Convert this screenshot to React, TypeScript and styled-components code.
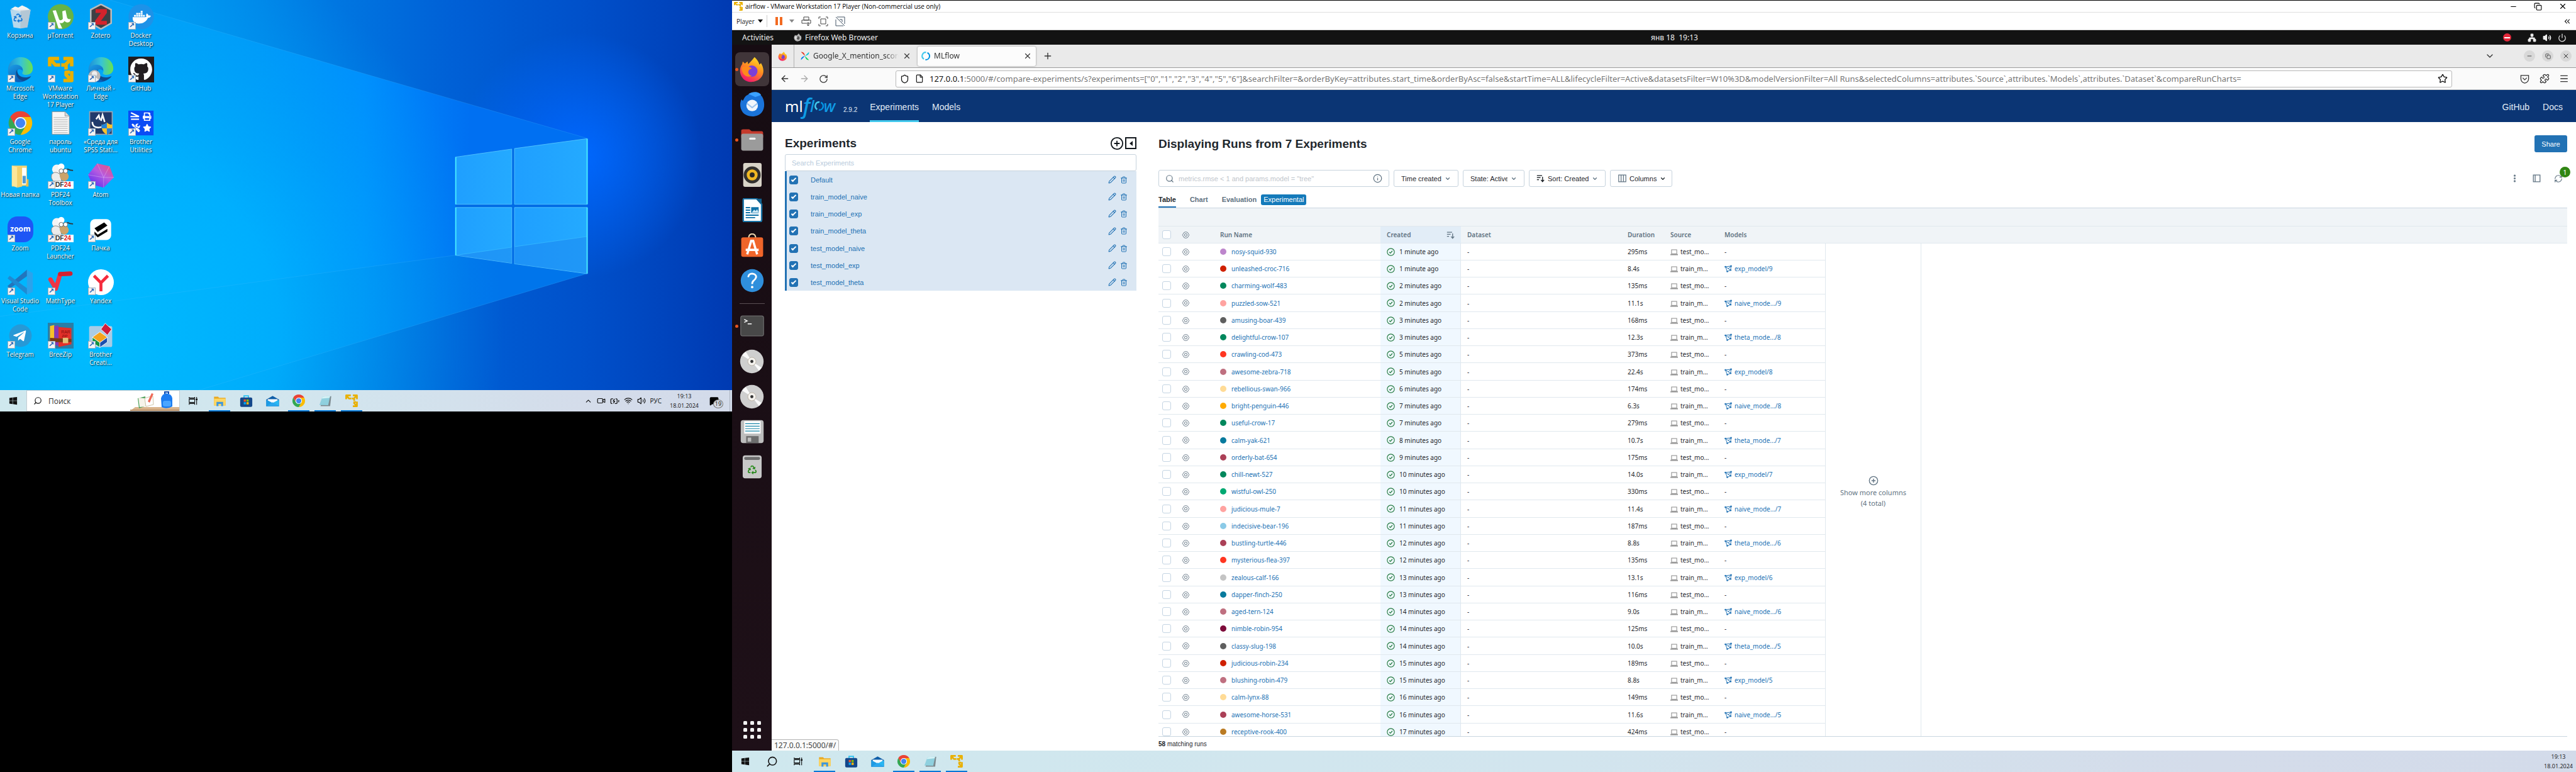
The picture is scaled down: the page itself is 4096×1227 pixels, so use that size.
import React from "react";
import styled, { createGlobalStyle, css } from "styled-components";
import {
  ArrowLeft, ArrowRight, ChevronDown, ChevronUp, CirclePlus, EllipsisVertical, File, Info,
  Menu, Minus, Network, Plus, Power, Puzzle, RefreshCw, RotateCw, Search, Shield, Star,
  Trash2, Volume2, X, Copy, ChevronsLeft, Pencil, Wifi, BatteryCharging, Video, MessageSquareText,
} from "lucide-react";
import { FaGithub, FaDocker, FaTelegramPlane, FaRecycle, FaWindows, FaStar, FaPrint, FaTools } from "react-icons/fa";

const ui = `"Liberation Sans", Arial, sans-serif`;
const ubuntu = `"Noto Sans", "Open Sans", sans-serif`;
const link = "#2272b4";
const muted = "#5f7281";
const ink = "#1f272d";
const line = "#e0e8ee";

const GlobalStyle = createGlobalStyle`
  *, *::before, *::after { box-sizing: border-box; }
  body { margin: 0; background: #000; font-family: ${ui}; font-size: 11px; color: ${ink}; }
  button, input, select { font: inherit; color: inherit; margin: 0; padding: 0; border: 0; background: none; }
  a { color: inherit; text-decoration: none; }
  h1, h2, p, ul { margin: 0; padding: 0; list-style: none; font-weight: inherit; font-size: inherit; }
  svg { display: block; flex: none; }
`;

/* ---------- colour icons ---------- */

type IconProps = { size?: number };
const Art = ({ size = 41, children, box = 48 }: IconProps & { children: React.ReactNode; box?: number }) => (
  <svg width={size} height={size} viewBox={`0 0 ${box} ${box}`} aria-hidden="true">{children}</svg>
);

const ChromeIcon = ({ size }: IconProps) => (
  <Art size={size}>
    <path d="M4.95 13A22 22 0 0 1 43.05 13L24 13A11 11 0 0 0 14.47 29.5Z" fill="#ea4335" />
    <path d="M43.05 13A22 22 0 0 1 24 46L33.53 29.5A11 11 0 0 0 24 13Z" fill="#fbbc05" />
    <path d="M24 46A22 22 0 0 1 4.95 13L14.47 29.5A11 11 0 0 0 33.53 29.5Z" fill="#34a853" />
    <circle cx="24" cy="24" r="11" fill="#fff" />
    <circle cx="24" cy="24" r="9" fill="#4285f4" />
  </Art>
);

const EdgeIcon = ({ size, person }: IconProps & { person?: boolean }) => (
  <Art size={size}>
    <defs>
      <linearGradient id="edgeTop" x1="0" y1="0.4" x2="1" y2="0.4">
        <stop offset="0" stopColor="#1d8fd8" /><stop offset="0.5" stopColor="#36c3d8" /><stop offset="1" stopColor="#6ae24e" />
      </linearGradient>
      <linearGradient id="edgeLow" x1="0" y1="0" x2="0.6" y2="1">
        <stop offset="0" stopColor="#1ba0e8" /><stop offset="1" stopColor="#0b5bb5" />
      </linearGradient>
    </defs>
    <path d="M1 22C3 8 14 1 25 1C38 1 47 11 47 22C47 30 41 34 34 34C29 34 26 32 28 29C31 25 27 17 18 17C9 17 4 21 1 28Z" fill="url(#edgeTop)" />
    <path d="M1 26C3 18 10 14 17 15C25 16 29 21 28 26C20 20 14 27 17 35C19 41 26 46 34 44C26 50 6 50 1 30Z" fill="url(#edgeLow)" />
    <path d="M18 24C12 32 19 45 31 45C36 44 41 41 44 36C32 42 17 38 18 24Z" fill="#114a8b" />
    {person && <><circle cx="12" cy="36" r="11" fill="#b9b9b9" /><circle cx="12" cy="32" r="5" fill="#eee" /><path d="M4 43Q12 34 20 43Q12 50 4 43" fill="#eee" /></>}
  </Art>
);

const VmwareIcon = ({ size }: IconProps) => (
  <Art size={size}>
    <g fill="none" stroke="#e9b000" strokeWidth="6.5" strokeLinejoin="round">
      <path d="M3.5 18V3.5H21M5 5L14 15.500H23" />
      <path d="M29 3.500H44.500V18M43 5L33 15M25 15.500H34V24" />
      <path d="M44.500 27V44.500H29M43 43L34 34V29H41" />
    </g>
  </Art>
);

const FirefoxIcon = ({ size, mono }: IconProps & { mono?: boolean }) => (
  <Art size={size}>
    <defs>
      <linearGradient id="ffBody" x1="0.8" y1="0" x2="0.3" y2="1">
        <stop offset="0" stopColor="#ffe226" /><stop offset="0.45" stopColor="#ff9020" /><stop offset="1" stopColor="#f4136f" />
      </linearGradient>
    </defs>
    <path d="M29 1C34 6 37 10 38 15L41 12C47 22 47 32 41 39C33 49 15 50 7 40C0 32 1 20 6 14L7 9L11 13L16 9L17 14C22 10 25 6 29 1Z" fill={mono ? "#b5b5b5" : "url(#ffBody)"} />
    <circle cx="24" cy="27" r="10.500" fill={mono ? "#555" : "#7b3fd8"} />
    <path d="M5 20C12 16 19 18 24 22C21 23 19 24 18 26C16 30 19 35 24 36C14 40 5 34 5 20Z" fill={mono ? "#ddd" : "#ff8a1c"} />
  </Art>
);

const FolderIcon = ({ size }: IconProps) => (
  <Art size={size}>
    <path d="M3 8H18L21 12H45V40H3Z" fill="#e9a820" />
    <path d="M3 15H45V40H3Z" fill="#fdd663" />
    <path d="M12 27H36V42H29V34H19V42H12Z" fill="#3f97dc" />
  </Art>
);

const StoreIcon = ({ size }: IconProps) => (
  <Art size={size}>
    <path d="M16 13V5H32V13" fill="none" stroke="#29c2f2" strokeWidth="4" />
    <rect x="2" y="11" width="44" height="34" rx="5" fill="#14478a" />
    <path d="M15 18H23V26H15Z" fill="#f35325" /><path d="M25 18H33V26H25Z" fill="#81bc06" />
    <path d="M15 28H23V36H15Z" fill="#05a6f0" /><path d="M25 28H33V36H25Z" fill="#ffba08" />
  </Art>
);

const MailIcon = ({ size }: IconProps) => (
  <Art size={size}>
    <path d="M1 18L24 5L47 18V43H1Z" fill="#0f5ea8" />
    <path d="M6 17H42V33H6Z" fill="#f3f9fd" />
    <path d="M1 19L24 31L1 43Z" fill="#1d9be4" /><path d="M47 19L24 31L47 43Z" fill="#29b6f2" />
    <path d="M1 43L24 28L47 43Z" fill="#2aa7ee" />
  </Art>
);

const NotepadIcon = ({ size }: IconProps) => (
  <Art size={size}>
    <path d="M17 8L45 6L41 42L6 42Z" fill="#7d8a8f" />
    <path d="M13 8L41 5L34 39L2 38Z" fill="#8fd0de" />
    <path d="M13 8L41 5L39 12L11 15Z" fill="#d5f1f5" />
  </Art>
);

const BinIcon = ({ size }: IconProps) => (
  <Art size={size}>
    <path d="M6 10L14 5L20 7L27 3L36 7L42 11L24 15Z" fill="#f3f3f1" />
    <path d="M5 11H43L37 44L24 46L11 44Z" fill="#d7e2ea" opacity="0.85" />
    <path d="M24 13L43 11L37 44L24 46Z" fill="#b2bdc6" opacity="0.6" />
    <g transform="translate(11 18)"><FaRecycle size={17} color="#1878d8" /></g>
  </Art>
);

const TorrentIcon = () => (
  <Art>
    <ellipse cx="24" cy="24" rx="24" ry="23.500" fill="#67b346" />
    <path d="M9 13L15 12L21 29Q24 33 28 28L27 14L33 12L36 26Q38 30 43 28L41 33Q35 37 31 32Q28 38 22 35L27 46L20 46Z" fill="#fff" />
  </Art>
);

const ZoteroIcon = () => (
  <Art>
    <path d="M24 1L43 11V36L24 47L5 36V11Z" fill="#3e4045" stroke="#b9bbbd" strokeWidth="3" />
    <path d="M14 10H35V17L24 32H35V39H13V32L24 17H14Z" fill="#d5232c" />
  </Art>
);

const DockerIcon = () => (
  <Art>
    <circle cx="24" cy="24" r="23.500" fill="#1d92e8" />
    <g transform="translate(8 8)"><FaDocker size={34} color="#fff" /></g>
  </Art>
);

const GithubIcon = () => (
  <Art>
    <rect width="48" height="48" fill="#211d20" />
    <g transform="translate(3 3)"><FaGithub size={42} color="#fff" /></g>
  </Art>
);

const DocIcon = () => (
  <Art>
    <path d="M8 3H32L40 11V45H8Z" fill="#f7f7f7" stroke="#8a8a8a" />
    <path d="M32 3V11H40" fill="#d8d8d8" stroke="#8a8a8a" />
    <path d="M11 14H37M11 18H37M11 22H37M11 26H37M11 30H37M11 34H37M11 38H37M11 42H37" stroke="#a5a5a5" />
  </Art>
);

const SpssIcon = () => (
  <Art>
    <rect x="3" y="3" width="42" height="42" fill="#203a6b" stroke="#9aa5b5" strokeWidth="2" />
    <path d="M8 22C8 34 20 34 30 30M15 17L20 10L22 18M24 20L27 9L31 22" fill="none" stroke="#fff" strokeWidth="3" />
    <path d="M25 27Q31 27 35 23Q39 27 45 27Q46 40 35 46Q24 40 25 27Z" fill="#f8c22c" />
    <path d="M35 23Q31 27 25 27V34H35ZM35 34H45Q42 43 35 46Z" fill="#2283d8" />
  </Art>
);

const BrotherUtilIcon = () => (
  <Art>
    <rect width="47" height="46" y="1" fill="#0a4cf5" />
    <path d="M5 5L20 12M4 12H20M5 17H20" stroke="#fff" strokeWidth="2.500" />
    <g transform="translate(27 4)"><FaPrint size={16} color="#fff" /></g>
    <g transform="translate(6 25)"><FaTools size={16} color="#fff" /></g>
    <g transform="translate(27 25)"><FaStar size={16} color="#fff" /></g>
  </Art>
);

const NewFolderIcon = () => (
  <Art>
    <path d="M8 5H36V42L8 44Z" fill="#f6d573" />
    <path d="M27 9H35V40H27Z" fill="#fff" /><path d="M28 24H34V38H28Z" fill="#4f9ad6" />
    <path d="M8 5L18 8V46L8 42Z" fill="#fbe69a" /><path d="M18 8L27 6V44L18 46Z" fill="#f2cf6b" />
    <path d="M36 30H39V44H34Z" fill="#e5bb4f" />
  </Art>
);

const Pdf24Icon = () => (
  <Art>
    <circle cx="17" cy="12" r="9" fill="#f4f4f4" /><circle cx="25" cy="7" r="6" fill="#fff" />
    <path d="M7 22Q12 14 22 20L26 34H10Q5 28 7 22Z" fill="#ececec" stroke="#777" />
    <path d="M22 20Q34 10 39 24Q39 33 30 34Q22 32 22 20Z" fill="#cba36a" />
    <circle cx="25" cy="15" r="4" fill="#fff" stroke="#555" /><circle cx="33" cy="15" r="4" fill="#fff" stroke="#555" />
    <path d="M36 11Q42 14 47 14" stroke="#333" strokeWidth="2" fill="none" />
    <rect y="34" width="48" height="14" fill="#fff" />
    <text x="14" y="45" fontFamily="Liberation Sans, sans-serif" fontSize="12" fontWeight="700" fill="#333">DF<tspan fill="#e01b22">24</tspan></text>
  </Art>
);

const AtomIcon = () => (
  <Art>
    <defs><linearGradient id="atom" x1="1" y1="0" x2="0.200" y2="1"><stop offset="0" stopColor="#f2506c" /><stop offset="0.500" stopColor="#b65be0" /><stop offset="1" stopColor="#5b2ff0" /></linearGradient></defs>
    <path d="M17 1L40 6L48 27L29 46L8 40L0 22Z" fill="url(#atom)" />
    <path d="M17 1L29 27L48 27M29 27L29 46M29 27L0 22M29 27L40 6" fill="none" stroke="#ffffff55" />
  </Art>
);

const ZoomIcon = () => (
  <Art>
    <rect width="48" height="48" rx="18" fill="#1e56f5" />
    <text x="24" y="28" textAnchor="middle" fontFamily="Open Sans, sans-serif" fontSize="14" fontWeight="700" fill="#fff">zoom</text>
  </Art>
);

const PachkaIcon = () => (
  <Art>
    <rect x="4" y="5" width="39" height="39" rx="9" fill="#fff" />
    <path d="M12 22L30 11L36 17L18 29Z" fill="#000" />
    <path d="M12 28L18 34L36 23V28L18 39L12 33Z" fill="#000" />
  </Art>
);

const VscodeIcon = () => (
  <Art>
    <path d="M36 1L47 7V42L36 47Z" fill="#2ba3ec" />
    <path d="M36 13V1L0 31L4 36Z" fill="#2275bd" /><path d="M36 35V47L0 17L4 12Z" fill="#1f8ad2" />
  </Art>
);

const MathTypeIcon = () => (
  <Art>
    <path d="M5 19L15 36L23 9L42 8" fill="none" stroke="#ee3545" strokeWidth="8" strokeLinecap="round" strokeLinejoin="round" />
    <path d="M23 9L42 8" stroke="#d22030" strokeWidth="8" strokeLinecap="round" />
  </Art>
);

const YandexIcon = () => (
  <Art>
    <circle cx="24" cy="24" r="24" fill="#fff" />
    <path d="M11 12L24 25L37 12M24 24V41" fill="none" stroke="#f52b3c" strokeWidth="5.500" />
  </Art>
);

const TelegramIcon = () => (
  <Art>
    <circle cx="24" cy="24" r="21" fill="#2799d6" />
    <g transform="translate(9 11)"><FaTelegramPlane size={27} color="#fff" /></g>
  </Art>
);

const BreeZipIcon = () => (
  <Art>
    <rect width="48" height="48" fill="#2a7ea6" />
    <path d="M4 6L12 4V42L4 38Z" fill="#f6c12a" /><path d="M12 6L20 5V43L12 41Z" fill="#8638b5" />
    <path d="M20 8L44 10V40L20 45Z" fill="#e4302a" />
    <text x="25" y="20" fontFamily="Liberation Sans, sans-serif" fontSize="8" fill="#7a0f0c">RAR</text>
    <text x="26" y="27" fontFamily="Liberation Sans, sans-serif" fontSize="7" fill="#7a0f0c">ZIP</text>
    <path d="M4 28L44 30V36L4 36Z" fill="#7a3b14" /><rect x="28" y="28" width="10" height="10" fill="#e2c27a" />
  </Art>
);

const BrotherCreatiIcon = () => (
  <Art>
    <rect x="2" y="6" width="43" height="39" rx="3" fill="#a9cce6" />
    <path d="M24 12L32 1L44 12L36 23Z" fill="#cf1c3c" stroke="#fff" />
    <path d="M8 27L22 17L36 27L22 37Z" fill="#f5a31d" stroke="#fff" />
    <path d="M8 27L22 37V46L8 37Z" fill="#149441" stroke="#fff" /><path d="M22 37L36 27V36L22 46Z" fill="#1b4fae" stroke="#fff" />
  </Art>
);

/* dock icons */

const ThunderbirdIcon = ({ size }: IconProps) => (
  <Art size={size}>
    <path d="M4 14C8 22 6 10 15 6C24 -1 38 0 41 7C48 14 49 30 43 38C35 50 14 49 6 39C0 31 0 20 4 14Z" fill="#1a73d9" />
    <path d="M17 4C26 -2 38 0 41 6L30 10Z" fill="#3ba1ff" />
    <circle cx="24" cy="26" r="11" fill="#f2f6fb" /><path d="M14 22L24 30L34 22" fill="none" stroke="#9cc4ee" strokeWidth="2.500" />
  </Art>
);
const FilesIcon = ({ size }: IconProps) => (
  <Art size={size}>
    <path d="M2 6Q2 3 6 3H18L23 7H43Q46 7 46 11V20H2Z" fill="#c53a2c" />
    <rect x="2" y="12" width="44" height="34" rx="4" fill="#9b9b9b" /><rect x="18" y="20" width="13" height="4" rx="2" fill="#f2f2f2" />
  </Art>
);
const SpeakerIcon = ({ size }: IconProps) => (
  <Art size={size}>
    <rect x="6" width="37" height="48" rx="4" fill="#d9d4c8" />
    <circle cx="24" cy="24" r="17" fill="#33312e" /><circle cx="24" cy="24" r="11" fill="#f0b823" /><circle cx="24" cy="24" r="5" fill="#2b2926" />
  </Art>
);
const WriterIcon = ({ size }: IconProps) => (
  <Art size={size}>
    <path d="M8 1H33L43 12V44Q43 47 40 47H8Q6 47 6 44V4Q6 1 8 1Z" fill="#fff" stroke="#1a75a8" strokeWidth="3" />
    <path d="M31 1H43V14Z" fill="#12628f" />
    <path d="M11 19H20M11 24H20M11 29H20M11 34H37M11 39H30" stroke="#1273a8" strokeWidth="2.500" />
    <rect x="22" y="18" width="15" height="12" fill="#1273a8" /><path d="M23 29L28 23L31 26L34 22L37 29Z" fill="#cfe8f5" />
  </Art>
);
const SoftwareIcon = ({ size }: IconProps) => (
  <Art size={size}>
    <path d="M17 10Q17 1 24 1Q31 1 31 10" fill="none" stroke="#f0d9b0" strokeWidth="2.500" />
    <rect x="2" y="8" width="44" height="39" rx="4" fill="#f0652a" />
    <path d="M14 42L22 15H26L34 42M11 33H37" fill="none" stroke="#fff" strokeWidth="4.500" />
  </Art>
);
const HelpIcon = ({ size }: IconProps) => (
  <Art size={size}>
    <circle cx="24" cy="24" r="23" fill="#2f8fdc" />
    <path d="M16 17Q17 10 24 10Q32 11 32 17Q31 21 27 24Q24 26 24 31" fill="none" stroke="#fff" strokeWidth="3.500" /><circle cx="24" cy="37" r="2.500" fill="#fff" />
  </Art>
);
const TerminalIcon = ({ size }: IconProps) => (
  <Art size={size}>
    <rect x="1" y="4" width="46" height="40" rx="4" fill="#484848" stroke="#6d6d6d" strokeWidth="1.500" />
    <path d="M8 11L14 14L8 17M15 20H23" fill="none" stroke="#fff" strokeWidth="1.800" />
  </Art>
);
const DiscIcon = ({ size }: IconProps) => (
  <Art size={size}>
    <circle cx="24" cy="24" r="23" fill="#cfcfcf" /><path d="M24 24L5 12L12 5ZM24 24L43 36L38 42Z" fill="#fafafa" />
    <circle cx="24" cy="24" r="8" fill="#f5f3ef" stroke="#b5ab9c" /><circle cx="24" cy="24" r="3" fill="#333" />
  </Art>
);
const FloppyIcon = ({ size }: IconProps) => (
  <Art size={size}>
    <rect x="1" y="1" width="46" height="46" rx="5" fill="#bdbdbd" /><rect x="8" y="3" width="33" height="25" fill="#fff" />
    <path d="M10 8H39M10 13H39M10 18H39M10 23H39" stroke="#1a86a8" strokeWidth="1.500" />
    <rect x="12" y="33" width="25" height="14" fill="#6d6d6d" /><rect x="15" y="36" width="7" height="8" fill="#bdbdbd" />
  </Art>
);
const TrashDockIcon = ({ size }: IconProps) => (
  <Art size={size}>
    <rect x="5" y="1" width="38" height="46" rx="5" fill="#c8c8c8" /><rect x="8" y="4" width="32" height="6" rx="3" fill="#6d6d6d" />
    <g transform="translate(15 21)"><FaRecycle size={18} color="#2a8a1e" /></g>
  </Art>
);
const AppsIcon = () => (
  <Art size={28} box={28}>
    {[0, 11, 22].map((y) => [0, 11, 22].map((x) => <rect key={`${x}-${y}`} x={x} y={y} width="6" height="6" rx="1.500" fill="#f2f2f2" />))}
  </Art>
);

/* page glyphs */

const AirflowIcon = () => (
  <Art size={14}>
    <path d="M24 24L2 2Q20 0 24 24Z" fill="#e43921" /><path d="M24 24L46 2Q48 20 24 24Z" fill="#00c7d4" />
    <path d="M24 24L46 46Q28 48 24 24Z" fill="#04d659" /><path d="M24 24L2 46Q0 28 24 24Z" fill="#017cee" />
  </Art>
);
const FlowRing = ({ size = 14, w = 7 }: IconProps & { w?: number }) => (
  <Art size={size}>
    <path d="M14 41A20 20 0 0 1 26 4" fill="none" stroke="#43c9ed" strokeWidth={w} />
    <path d="M33 6A20 20 0 0 1 22 44" fill="none" stroke="#0194e2" strokeWidth={w} />
  </Art>
);
const EyeIcon = () => (
  <Art size={13} box={16}>
    <path d="M1.500 8L4.500 3Q8 0.800 11.500 3L14.500 8L11.500 13Q8 15.200 4.500 13Z" fill="none" stroke={muted} strokeWidth="1.100" />
    <circle cx="8" cy="8" r="2.600" fill="none" stroke={muted} strokeWidth="1.200" />
  </Art>
);
const CheckRing = () => (
  <Art size={13} box={16}>
    <circle cx="8" cy="8" r="7" fill="none" stroke="#277c43" strokeWidth="1.400" /><path d="M5 8.200L7.200 10.300L11 5.800" fill="none" stroke="#277c43" strokeWidth="1.600" />
  </Art>
);
const LaptopIcon = () => (
  <Art size={12} box={16}>
    <rect x="2.500" y="4" width="11" height="8.500" fill="none" stroke="#8f8f8f" strokeWidth="1.400" /><path d="M0 13H16V15.500H0Z" fill="#9a9a9a" />
  </Art>
);
const ModelIcon = () => (
  <Art size={12} box={16}>
    <path d="M2 4L14 2.500L13 11L6 14ZM2 4L13 11M14 2.500L8 8" fill="none" stroke={link} strokeWidth="1.300" />
    {[[2, 4], [14, 2.5], [13, 11], [6, 14]].map(([x, y]) => <circle key={x} cx={x} cy={y} r="1.800" fill={link} />)}
  </Art>
);
const SortIcon = ({ color = muted }: { color?: string }) => (
  <Art size={13} box={16}>
    <path d="M1 2.500H11M1 6.500H8M1 10.500H5M12 5V14M9 11L12 14.500L15 11" fill="none" stroke={color} strokeWidth="1.600" />
  </Art>
);
const ColumnsIcon = () => (
  <Art size={13} box={16}><path d="M1 1.500H15V14.500H1ZM5.700 1.500V14.500M10.300 1.500V14.500" fill="none" stroke={muted} strokeWidth="1.500" /></Art>
);
const PanelIcon = () => (
  <Art size={13} box={16}><path d="M1.500 1.500H14.500V14.500H1.500ZM5 1.500V14.500" fill="none" stroke={muted} strokeWidth="1.600" /></Art>
);
const TaskViewIcon = () => (
  <Art size={14} box={16}><path d="M1 1V3H11V1M1 15V13H11V15M1 5H11V11H1ZM14.500 1V4M14.500 7V15" fill="none" stroke="#000" strokeWidth="1.200" /><path d="M13 4H16V7H13Z" /></Art>
);
const TaskSearchIcon = styled(Search)` transform: scaleX(-1); `;

/* ---------- layout ---------- */

const Screens = styled.div`
  display: grid; grid-template-columns: 1164fr 2932fr; height: 100vh; background: #000; overflow: hidden;
`;
const Laptop = styled.section`
  display: flex; flex-direction: column; align-self: start; aspect-ratio: 1366 / 768; min-width: 0;
`;
const Desktop = styled.div` position: relative; flex: 1; min-height: 0; `;
const Backdrop = styled.svg` position: absolute; inset: 0; width: 100%; height: 100%; `;
const Shortcuts = styled.ul`
  position: relative; height: 100%; padding: 6px 0 23px; width: max-content;
  display: grid; grid-auto-flow: column; grid-template-rows: repeat(7, 1fr); grid-auto-columns: 64px;
`;
const Shortcut = styled.li` display: flex; flex-direction: column; align-items: center; min-height: 0; gap: 3px; `;
const ShortcutArt = styled.span<{ $arrow?: boolean }>`
  position: relative;
  ${(p) => p.$arrow && css`
    &::after {
      content: "↗"; position: absolute; left: 0; bottom: 0; width: 12px; height: 12px; background: #f4f4f4; border: 1px solid #9fb0bf;
      color: #2460b0; font: 700 11px/10px "DejaVu Sans", sans-serif; text-align: center;
    }
  `}
`;
const ShortcutName = styled.span`
  font: 10px/13px "Open Sans", ${ubuntu}; color: #fff; text-align: center; text-shadow: 1px 1px 2px #000; white-space: pre-line;
  width: 64px;
`;

const Taskbar = styled.footer`
  display: flex; align-items: stretch; flex: none; height: 34px; color: #111;
  background: linear-gradient(90deg, #cfe8ee, #d2e5ee 45%, #d4dcea 80%, #d3dbea);
`;
const TaskButton = styled.button<{ $open?: boolean; $narrow?: boolean }>`
  display: grid; place-items: center; width: 42px; padding: 0 4px;
  background: ${(p) => (p.$open ? "linear-gradient(#0078d7, #0078d7) center bottom / 34px 2px no-repeat" : "none")};
`;
const TaskSearch = styled.label`
  display: flex; align-items: center; gap: 10px; width: 244px; padding-left: 10px; background: #fff; border: 1px solid #c3ccd2; overflow: hidden;
`;
const TaskSearchInput = styled.input`
  flex: 1; min-width: 0; font: 12px "Open Sans", ${ubuntu}; outline: 0;
  &::placeholder { color: #333; opacity: 1; }
`;
const Tray = styled.div` display: flex; align-items: center; margin-left: auto; gap: 7px; `;
const TrayText = styled.span` font: 10px/15px "Open Sans", ${ubuntu}; `;
const Clock = styled.time<{ $edge?: boolean }>`
  font: 9px/15px "Open Sans", ${ubuntu}; text-align: center; white-space: pre-line; margin: ${(p) => (p.$edge ? "0 5px 0 0" : "0 10px 0 6px")};
`;
const Notice = styled.button` position: relative; margin-right: 17px; `;
const NoticeCount = styled.span`
  position: absolute; left: 6px; top: 5px; width: 16px; height: 14px; border: 1px solid #777; border-radius: 50%; background: #d5dae2;
  font: 9px/12px "Open Sans", sans-serif; text-align: center;
`;
const ShowDesktop = styled.button` width: 4px; align-self: stretch; border-left: 1px solid #a9b3bf; margin-left: -7px; `;

const Monitor = styled.section` display: flex; flex-direction: column; min-width: 0; min-height: 0; border-top: 1px solid #000; `;
const TitleBar = styled.header`
  display: flex; align-items: center; gap: 4px; height: 19px; padding: 0 14px 0 3px; background: #fff; border-bottom: 1px solid #dfdfdf;
  font: 10px "Open Sans", ${ubuntu}; color: #000;
`;
const TitleActions = styled.div` margin-left: auto; display: flex; gap: 26px; `;
const PlayerBar = styled.div`
  display: flex; align-items: center; height: 28px; padding: 0 7px; gap: 11px; background: #fff; border-bottom: 1px solid #d5d5d5;
  font: 10px "Open Sans", ${ubuntu}; color: #222;
`;
const PlayerMenu = styled.button`
  display: flex; align-items: center; gap: 5px; padding-right: 6px; height: 19px; border-right: 1px solid #ccc;
`;
const Caret = styled.span<{ $dim?: boolean }>`
  border: 4px solid transparent; border-top: 5px solid ${(p) => (p.$dim ? "#888" : "#000")}; border-bottom: 0;
`;
const PauseMark = styled.button` width: 11px; height: 13px; margin-left: 2px; border: solid #f26a21; border-width: 0 4px; `;
const PushRight = styled.span` margin-left: auto; `;

const GnomeBar = styled.div`
  display: grid; grid-template-columns: 1fr auto 1fr; align-items: center; height: 23px; padding: 0 15px 0 16px; background: #131313;
  color: #eee; font: 12px/16px ${ubuntu};
`;
const GnomeLeft = styled.div` display: flex; align-items: center; gap: 5px; `;
const Activities = styled.button` margin-right: 27px; `;
const GnomeClock = styled.time` padding-left: 64px; font-size: 12px; white-space: pre; `;
const GnomeRight = styled.div` display: flex; justify-content: flex-end; align-items: center; gap: 10px; `;
const Busy = styled.span`
  display: grid; place-items: center; width: 13px; height: 13px; margin-right: 16px; border-radius: 50%; background: #e4273a;
  &::after { content: ""; width: 9px; height: 2px; background: #fff; }
`;

const Guest = styled.div` display: flex; flex: 1; min-height: 0; `;
const Dock = styled.nav`
  display: flex; flex-direction: column; align-items: center; width: 63px; flex: none; padding: 11px 0 19px; background: linear-gradient(#160c12, #1e1018);
`;
const DockItem = styled.button<{ $running?: boolean; $active?: boolean }>`
  position: relative; display: grid; place-items: center; width: 54px; height: 56px; flex: none; border-radius: 8px;
  background: ${(p) => (p.$active ? "#403539" : "none")}; background-clip: padding-box; border: solid transparent; border-width: 1px 0;
  ${(p) => p.$running && css`
    &::before { content: ""; position: absolute; left: 0; width: 5px; height: 5px; border-radius: 50%; background: #e95420; }
  `}
`;
const DockRule = styled.hr` width: 40px; height: 1px; margin: 8px 0 7px; border: 0; background: #5a4f54; `;
const DockSpace = styled.div` flex: 1; `;

const Browser = styled.div` position: relative; display: flex; flex-direction: column; flex: 1; min-width: 0; background: #fff; `;
const TabStrip = styled.div`
  display: flex; align-items: center; gap: 4px; height: 37px; padding-right: 7px; background: #eaeaea; border-bottom: 1px solid #9c9c9c;
  font: 12px/16px ${ubuntu}; color: #333;
`;
const PinnedTab = styled.button` display: grid; place-items: center; width: 36px; height: 36px; border-right: 1px solid #b0b0b0; `;
const BrowserTab = styled.div<{ $active?: boolean }>`
  display: flex; align-items: center; gap: 6px; width: 188px; height: 31px; padding: 0 6px; border-radius: 3px;
  ${(p) => p.$active && css` background: #fcfcfc; box-shadow: 0 0 3px #0006; `}
`;
const TabTitle = styled.span`
  flex: 1; overflow: hidden; white-space: nowrap; mask-image: linear-gradient(90deg, #000 85%, transparent);
`;
const NewTab = styled.button` display: grid; place-items: center; width: 30px; `;
const WindowActions = styled.div` display: flex; align-items: center; gap: 11px; margin-left: auto; `;
const RoundAction = styled.button` display: grid; place-items: center; width: 18px; height: 18px; border-radius: 50%; background: #d8d8d8; `;
const TabList = styled.button` margin-right: 35px; `;
const AddressBar = styled.div`
  display: flex; align-items: center; height: 35px; padding: 0 4px 0 5px; background: #fafafa; border-bottom: 1px solid #ccc; color: #444;
`;
const ToolButton = styled.button<{ $off?: boolean }>` display: grid; place-items: center; width: 31px; height: 31px; color: ${(p) => (p.$off ? "#aaa" : "#333")}; `;
const AddressBox = styled.label`
  display: flex; align-items: center; flex: 1; min-width: 0; height: 27px; margin: 0 100px 0 99px; padding: 0 6px; border: 1px solid #b9b9b9; border-radius: 3px;
  background: #fff; font: 13px/18px ${ubuntu}; color: #111;
`;
const AddressMark = styled.span` margin-right: 9px; `;
const AddressInput = styled.input` flex: 1; min-width: 0; color: #777; outline: 0; `;

const SiteHeader = styled.header`
  display: flex; align-items: stretch; height: 51px; padding: 0 21px; background: #0b3574; color: #e2ecf6; font-size: 14px; flex: none;
`;
const Brand = styled.a` display: flex; align-items: center; width: 88px; font: 24px/51px ${ubuntu}; color: #fff; `;
const BrandFlow = styled.span<{ $tall?: boolean }>`
  font-style: italic; font-weight: 500; color: #0f9ce6; font-size: ${(p) => (p.$tall ? 34 : 25)}px;
`;
const Version = styled.span` align-self: flex-end; margin: 0 20px 0 5px; padding-bottom: 13px; font-size: 10px; line-height: 12px; `;
const SiteLinks = styled.nav<{ $end?: boolean }>` display: flex; gap: 21px; ${(p) => p.$end && "margin-left: auto;"} `;
const SiteLink = styled.a<{ $on?: boolean }>`
  display: flex; align-items: center; padding: 6px 0 0; border-bottom: 3px solid ${(p) => (p.$on ? "#43c9ed" : "transparent")};
`;

const Page = styled.div` display: flex; flex: 1; min-height: 0; padding: 0 14px 0 21px; gap: 35px; `;
const Sidebar = styled.aside` width: 559px; flex: none; padding-top: 20px; `;
const SideTop = styled.div` display: flex; align-items: center; height: 27px; margin-bottom: 4px; gap: 2px; `;
const Heading = styled.h2` flex: 1; font-size: 19px; line-height: 27px; font-weight: 700; `;
const CollapseButton = styled.button`
  display: grid; place-items: center; width: 18px; height: 19px; border: 2px solid #11171c;
  &::after { content: ""; border: 4px solid transparent; border-right: 5px solid #11171c; border-left: 0; }
`;
const field = css` height: 27px; border: 1px solid #c7d3dd; border-radius: 3px; background: #fff; `;
const SideSearch = styled.input` ${field} display: block; width: 100%; padding: 0 10px; &::placeholder { color: #b8cbdc; opacity: 1; } `;
const ExperimentList = styled.ul` background: #dbe7f3; border-left: 3px solid ${link}; color: ${link}; `;
const Experiment = styled.li`
  display: flex; align-items: center; gap: 6px; height: 27px; padding: 0 14px 0 4px;
  &:nth-child(4n) { height: 28px; }
`;
const ExperimentName = styled.label` flex: 1; display: flex; align-items: center; gap: 20px; `;
const IconButton = styled.button` display: grid; place-items: center; position: relative; color: inherit; `;
const Tick = styled.input`
  appearance: none; display: block; width: 14px; height: 14px; border: 1px solid #c5d5e3; border-radius: 3px; background: #fff;
  &:checked { background: ${link}; border-color: ${link}; display: grid; place-items: center; }
  &:checked::after { content: ""; width: 4px; height: 8px; border: solid #fff; border-width: 0 2px 2px 0; transform: translateY(-1px) rotate(45deg); }
`;

const Main = styled.main` display: flex; flex-direction: column; flex: 1; min-width: 0; padding-top: 21px; `;
const MainTop = styled.div` display: flex; align-items: center; margin-bottom: 28px; `;
const ShareButton = styled.button` height: 27px; width: 52px; border-radius: 3px; background: ${link}; color: #fff; `;
const Filters = styled.div` display: flex; align-items: center; gap: 7px; `;
const RunSearch = styled.label`
  ${field} display: flex; align-items: center; gap: 7px; width: 367px; padding: 0 10px; color: ${muted};
`;
const RunSearchInput = styled.input` flex: 1; min-width: 0; outline: 0; &::placeholder { color: #bfc6cc; opacity: 1; } `;
const PickBox = styled.label<{ $w: number }>`
  ${field} display: flex; align-items: center; gap: 5px; width: ${(p) => p.$w}px; padding: 0 11px; color: ${muted};
`;
const Pick = styled.select` appearance: none; flex: 1; min-width: 0; color: ${ink}; outline: 0; `;
const ColumnsButton = styled.button` ${field} display: flex; align-items: center; gap: 5px; width: 99px; padding: 0 12px; `;
const ViewActions = styled.div` display: flex; align-items: center; gap: 21px; margin: 0 7px 0 auto; color: ${muted}; `;
const UpdateCount = styled.span`
  position: absolute; left: 9px; top: -12px; width: 17px; height: 17px; border-radius: 50%; background: #308613; color: #fff; font: 11px/17px ${ubuntu}; text-align: center;
`;
const ViewTabs = styled.div` display: flex; gap: 22px; padding-top: 12px; margin-bottom: -1px; `;
const ViewTab = styled.button<{ $on?: boolean }>`
  display: flex; gap: 7px; height: 22px; line-height: 17px; font-weight: 700; color: ${(p) => (p.$on ? ink : muted)};
  border-bottom: 3px solid ${(p) => (p.$on ? link : "transparent")};
`;
const NewTag = styled.span` height: 17px; padding: 0 4px; border-radius: 3px; background: #147aba; color: #fff; font-weight: 400; `;

const TableFrame = styled.div` flex: 1; min-height: 0; overflow: hidden; border-top: 1px solid #c9d6e0; `;
const RunTable = styled.table`
  width: 100%; table-layout: fixed; border-collapse: separate; border-spacing: 0; font: 10px/16px ${ubuntu};
`;
const GroupCell = styled.th` height: 29px; padding: 0; background: #f0f4f7; border-bottom: 1px solid ${line}; `;
const HeadCell = styled.th<{ $sorted?: boolean }>`
  height: 27px; padding: 0 10px; text-align: left; font-weight: 600; color: ${muted};
  background: ${(p) => (p.$sorted ? "#e2edf7" : "#f0f4f7")}; border-bottom: 1px solid ${line};
  &:first-child { padding: 0 6px; }
`;
const Row = styled.tr` height: 27px; &:nth-child(4n) { height: 28px; } `;
const Cell = styled.td<{ $sorted?: boolean }>`
  padding: 0 10px; white-space: nowrap; border-bottom: 1px solid ${line};
  ${(p) => p.$sorted && css` background: #f0f8ff; border-right: 1px solid ${line}; `}
  &:first-child { padding: 0 6px; }
`;
const Inline = styled.span<{ $gap?: number; $spread?: boolean }>`
  display: flex; align-items: center; gap: ${(p) => p.$gap ?? 4}px; ${(p) => p.$spread && "justify-content: space-between;"}
`;
const RunLink = styled.a` color: ${link}; `;
const Dot = styled.span<{ $color: string }>` width: 10px; height: 10px; border-radius: 50%; background: ${(p) => p.$color}; `;
const MoreCell = styled.td` padding: 0; border: solid ${line}; border-width: 0 1px; vertical-align: middle; `;
const MoreButton = styled.button`
  display: flex; flex-direction: column; align-items: center; width: 100%; font: 11px/17px ${ubuntu}; color: ${muted}; gap: 2px; white-space: pre-line;
`;
const RunCount = styled.p` height: 23px; border-top: 1px solid #c9d6e0; font-size: 10px; line-height: 23px; `;
const LinkPreview = styled.span`
  position: absolute; left: 0; bottom: 0; height: 18px; padding: 0 4px; background: #fafafa; border: solid #b5b5b5; border-width: 1px 1px 0 0; border-radius: 0 4px 0 0;
  font: 12px/17px ${ubuntu}; color: #444;
`;

/* ---------- data ---------- */

const shortcuts: [string, React.ReactNode, boolean?][] = [
  ["Корзина", <BinIcon />, false], ["Microsoft\nEdge", <EdgeIcon />], ["Google\nChrome", <ChromeIcon size={41} />],
  ["Новая папка", <NewFolderIcon />, false], ["Zoom", <ZoomIcon />], ["Visual Studio\nCode", <VscodeIcon />], ["Telegram", <TelegramIcon />],
  ["µTorrent", <TorrentIcon />], ["VMware\nWorkstation\n17 Player", <VmwareIcon />], ["пароль\nubuntu", <DocIcon />, false],
  ["PDF24\nToolbox", <Pdf24Icon />], ["PDF24\nLauncher", <Pdf24Icon />], ["MathType", <MathTypeIcon />], ["BreeZip", <BreeZipIcon />],
  ["Zotero", <ZoteroIcon />], ["Личный -\nEdge", <EdgeIcon person />], ["«Среда для\nSPSS Stati...", <SpssIcon />],
  ["Atom", <AtomIcon />], ["Пачка", <PachkaIcon />], ["Yandex", <YandexIcon />], ["Brother\nCreati...", <BrotherCreatiIcon />],
  ["Docker\nDesktop", <DockerIcon />], ["GitHub", <GithubIcon />], ["Brother\nUtilities", <BrotherUtilIcon />],
];

const experiments = ["Default", "train_model_naive", "train_model_exp", "train_model_theta", "test_model_naive", "test_model_exp", "test_model_theta"];

const runs: [string, string, number, string, string][] = [
  ["nosy-squid-930", "#bd86cc", 1, "295ms", ""],
  ["unleashed-croc-716", "#cf2000", 1, "8.4s", "exp_model/9"],
  ["charming-wolf-483", "#00875c", 2, "135ms", ""],
  ["puzzled-sow-521", "#ffa3a0", 2, "11.1s", "naive_mode.../9"],
  ["amusing-boar-439", "#5f5f5f", 3, "168ms", ""],
  ["delightful-crow-107", "#00875c", 3, "12.3s", "theta_mode.../8"],
  ["crawling-cod-473", "#ff3621", 5, "373ms", ""],
  ["awesome-zebra-718", "#bf7080", 5, "22.4s", "exp_model/8"],
  ["rebellious-swan-966", "#ffdb96", 6, "174ms", ""],
  ["bright-penguin-446", "#ffab00", 7, "6.3s", "naive_mode.../8"],
  ["useful-crow-17", "#00875c", 7, "279ms", ""],
  ["calm-yak-621", "#077a9d", 8, "10.7s", "theta_mode.../7"],
  ["orderly-bat-654", "#ab4057", 9, "175ms", ""],
  ["chill-newt-527", "#00875c", 10, "14.0s", "exp_model/7"],
  ["wistful-owl-250", "#00a972", 10, "330ms", ""],
  ["judicious-mule-7", "#ffa3a0", 11, "11.4s", "naive_mode.../7"],
  ["indecisive-bear-196", "#8bcae7", 11, "187ms", ""],
  ["bustling-turtle-446", "#ab4057", 12, "8.8s", "theta_mode.../6"],
  ["mysterious-flea-397", "#ff3621", 12, "135ms", ""],
  ["zealous-calf-166", "#c4c4c4", 13, "13.1s", "exp_model/6"],
  ["dapper-finch-250", "#077a9d", 13, "116ms", ""],
  ["aged-tern-124", "#bf7080", 14, "9.0s", "naive_mode.../6"],
  ["nimble-robin-954", "#7d0c3a", 14, "125ms", ""],
  ["classy-slug-198", "#5f5f5f", 14, "10.0s", "theta_mode.../5"],
  ["judicious-robin-234", "#cf2000", 15, "189ms", ""],
  ["blushing-robin-479", "#bf7080", 15, "8.8s", "exp_model/5"],
  ["calm-lynx-88", "#ffdb96", 16, "149ms", ""],
  ["awesome-horse-531", "#ab4057", 16, "11.6s", "naive_mode.../5"],
  ["receptive-rook-400", "#ba7b23", 17, "424ms", ""],
];

const address =
  ':5000/#/compare-experiments/s?experiments=["0","1","2","3","4","5","6"]&searchFilter=&orderByKey=attributes.start_time&orderByAsc=false&startTime=ALL&lifecycleFilter=Active&datasetsFilter=W10%3D&modelVersionFilter=All Runs&selectedColumns=attributes.`Source`,attributes.`Models`,attributes.`Dataset`&compareRunCharts=';

/* ---------- pieces ---------- */

const Wallpaper = () => (
  <Backdrop viewBox="0 0 1366 728" preserveAspectRatio="none" aria-hidden="true">
    <defs>
      <linearGradient id="sky">
        <stop offset="0" stopColor="#00a2f6" /><stop offset="0.250" stopColor="#0096f0" /><stop offset="0.450" stopColor="#0078e2" />
        <stop offset="0.620" stopColor="#0060d6" /><stop offset="0.800" stopColor="#0050ca" /><stop offset="1" stopColor="#003ab2" />
      </linearGradient>
      <linearGradient id="beam">
        <stop offset="0" stopColor="#00aaff" stopOpacity="0.200" /><stop offset="0.350" stopColor="#00a4ff" stopOpacity="0.700" />
        <stop offset="0.620" stopColor="#008eff" /><stop offset="0.800" stopColor="#0070f2" />
      </linearGradient>
      <radialGradient id="glow" gradientUnits="userSpaceOnUse" cx="1080" cy="290" r="230">
        <stop offset="0" stopColor="#0068ff" /><stop offset="1" stopColor="#0068ff" stopOpacity="0" />
      </radialGradient>
      <radialGradient id="pool" gradientUnits="userSpaceOnUse" cx="180" cy="620" r="760">
        <stop offset="0" stopColor="#00bcff" /><stop offset="0.450" stopColor="#00b4ff" stopOpacity="0.800" /><stop offset="1" stopColor="#009cf0" stopOpacity="0" />
      </radialGradient>
      <linearGradient id="pane" x1="0" x2="1"><stop offset="0" stopColor="#1f9fff" /><stop offset="1" stopColor="#24aaff" /></linearGradient>
    </defs>
    <rect width="1366" height="728" fill="url(#sky)" />
    <rect width="1366" height="728" fill="url(#glow)" />
    <path d="M0 0H205L1096 258V510L370 728H0Z" fill="url(#beam)" />
    <path d="M0 590L850 476L1096 510L370 728H0Z" fill="#0080dc" opacity="0.300" />
    <rect width="1366" height="728" fill="url(#pool)" />
    <path d="M205 0L1096 258M370 728L1096 510M0 590L850 476" stroke="#4cc3ff" strokeOpacity="0.250" fill="none" />
    <path d="M850 293L1096 258V510L850 476Z" fill="#006be6" />
    <g fill="url(#pane)" stroke="#58c8ff" strokeWidth="1">
      <path d="M850 293L955 278V381H850Z" /><path d="M960 277L1096 258.500V381H960Z" />
      <path d="M850 387H955V491L850 476Z" /><path d="M960 387H1096V510.500L960 492Z" />
    </g>
    <path d="M850 476L955 461V491ZM960 460L1096 441V510L960 492Z" fill="#1c86f0" opacity="0.500" />
    <path d="M850 476L955 461M960 460L1096 441" stroke="#35b9ff" />
    <path d="M850.500 293V381M850.500 387V476M1095.500 259V381M1095.500 387V510" stroke="#48f0ff" strokeWidth="2" />
  </Backdrop>
);

const SearchArt = () => (
  <svg width="78" height="32" viewBox="0 0 78 32" aria-hidden="true">
    <path d="M8 26H78V32H0Z" fill="#d9b48c" /><path d="M0 30H78V32H0Z" fill="#b98f66" />
    <path d="M12 12L24 9L26 24L14 28Z" fill="#4da25b" /><path d="M13 11L23 12L25 25L15 26Z" fill="#f7f4ea" /><path d="M23 12L36 8L37 22L25 25Z" fill="#fff" stroke="#cfc6a8" />
    <path d="M28 17L34 4L37 5L31 19Z" fill="#ee6a58" /><path d="M49 12Q51 5 57 4Q66 5 67 12V25Q58 30 50 26Z" fill="#1b7cf0" />
    <path d="M55 5V2H61V5" fill="none" stroke="#0b4bb0" strokeWidth="2" /><rect x="52" y="16" width="13" height="9" rx="3" fill="#4aa5ff" />
  </svg>
);

const PinnedApps = () => (
  <>
    <TaskButton aria-label="Task view"><TaskViewIcon /></TaskButton>
    <TaskButton $open aria-label="File Explorer"><FolderIcon size={21} /></TaskButton>
    <TaskButton aria-label="Microsoft Store"><StoreIcon size={21} /></TaskButton>
    <TaskButton aria-label="Mail"><MailIcon size={21} /></TaskButton>
    <TaskButton $open aria-label="Google Chrome"><ChromeIcon size={22} /></TaskButton>
    <TaskButton $open aria-label="Notepad"><NotepadIcon size={21} /></TaskButton>
    <TaskButton $open aria-label="VMware Player"><VmwareIcon size={20} /></TaskButton>
  </>
);

const LaptopScreen = () => (
  <Laptop>
    <Desktop>
      <Wallpaper />
      <Shortcuts>
        {shortcuts.map(([name, art, arrow = true]) => (
          <Shortcut key={name}>
            <ShortcutArt $arrow={arrow}>{art}</ShortcutArt>
            <ShortcutName>{name}</ShortcutName>
          </Shortcut>
        ))}
      </Shortcuts>
    </Desktop>
    <Taskbar>
      <TaskButton aria-label="Start"><FaWindows size={14} /></TaskButton>
      <TaskSearch>
        <TaskSearchIcon size={14} strokeWidth={2} />
        <TaskSearchInput placeholder="Поиск" aria-label="Поиск" />
        <SearchArt />
      </TaskSearch>
      <PinnedApps />
      <Tray>
        <ChevronUp size={13} /><Video size={14} /><BatteryCharging size={15} /><Wifi size={14} /><Volume2 size={14} />
        <TrayText>РУС</TrayText>
        <Clock>{"19:13\n18.01.2024"}</Clock>
        <Notice aria-label="Notifications"><MessageSquareText size={15} fill="#000" color="#000" /><NoticeCount>19</NoticeCount></Notice>
        <ShowDesktop aria-label="Show desktop" />
      </Tray>
    </Taskbar>
  </Laptop>
);

const DockBar = () => (
  <Dock>
    <DockItem $running $active aria-label="Firefox"><FirefoxIcon size={41} /></DockItem>
    <DockItem aria-label="Thunderbird"><ThunderbirdIcon size={40} /></DockItem>
    <DockItem $running aria-label="Files"><FilesIcon size={38} /></DockItem>
    <DockItem aria-label="Rhythmbox"><SpeakerIcon size={38} /></DockItem>
    <DockItem aria-label="Writer"><WriterIcon size={38} /></DockItem>
    <DockItem aria-label="Software"><SoftwareIcon size={38} /></DockItem>
    <DockItem aria-label="Help"><HelpIcon size={38} /></DockItem>
    <DockRule />
    <DockItem $running aria-label="Terminal"><TerminalIcon size={38} /></DockItem>
    <DockItem aria-label="Disc 1"><DiscIcon size={39} /></DockItem>
    <DockItem aria-label="Disc 2"><DiscIcon size={39} /></DockItem>
    <DockItem aria-label="Floppy"><FloppyIcon size={38} /></DockItem>
    <DockItem aria-label="Trash"><TrashDockIcon size={38} /></DockItem>
    <DockSpace />
    <button aria-label="Show applications"><AppsIcon /></button>
  </Dock>
);

const ExperimentsPanel = () => (
  <Sidebar>
    <SideTop>
      <Heading>Experiments</Heading>
      <IconButton aria-label="New experiment"><CirclePlus size={22} strokeWidth={2} color="#11171c" /></IconButton>
      <CollapseButton aria-label="Collapse" />
    </SideTop>
    <SideSearch placeholder="Search Experiments" aria-label="Search Experiments" />
    <ExperimentList>
      {experiments.map((name) => (
        <Experiment key={name}>
          <ExperimentName><Tick type="checkbox" defaultChecked />{name}</ExperimentName>
          <IconButton aria-label={`Rename ${name}`}><Pencil size={13} /></IconButton>
          <IconButton aria-label={`Delete ${name}`}><Trash2 size={12} /></IconButton>
        </Experiment>
      ))}
    </ExperimentList>
  </Sidebar>
);

const Picker = ({ label, width, icon }: { label: string; width: number; icon?: React.ReactNode }) => (
  <PickBox $w={width}>
    {icon}
    <Pick aria-label={label}><option>{label}</option></Pick>
    <ChevronDown size={10} strokeWidth={3} />
  </PickBox>
);

const widths = [27, 61, 265, 128, 255, 68, 86, 170, 153];

const RunsTable = () => (
  <RunTable>
    <colgroup>{widths.map((w, i) => <col key={i} width={w} />)}<col /></colgroup>
    <thead>
      <tr><GroupCell colSpan={10} /></tr>
      <tr>
        <HeadCell><Tick type="checkbox" aria-label="Select all runs" /></HeadCell>
        <HeadCell><EyeIcon /></HeadCell>
        <HeadCell>Run Name</HeadCell>
        <HeadCell $sorted><Inline $spread>Created <SortIcon /></Inline></HeadCell>
        <HeadCell>Dataset</HeadCell>
        <HeadCell>Duration</HeadCell>
        <HeadCell>Source</HeadCell>
        <HeadCell>Models</HeadCell>
        <HeadCell colSpan={2} />
      </tr>
    </thead>
    <tbody>
      {runs.map(([name, color, minutes, duration, model], i) => (
        <Row key={name}>
          <Cell><Tick type="checkbox" aria-label={`Select ${name}`} /></Cell>
          <Cell><EyeIcon /></Cell>
          <Cell><Inline $gap={8}><Dot $color={color} /><RunLink href="#">{name}</RunLink></Inline></Cell>
          <Cell $sorted><Inline $gap={7}><CheckRing />{minutes} {minutes === 1 ? "minute" : "minutes"} ago</Inline></Cell>
          <Cell>-</Cell>
          <Cell>{duration}</Cell>
          <Cell><Inline><LaptopIcon />{i % 2 ? "train_m..." : "test_mo..."}</Inline></Cell>
          <Cell>{model ? <Inline><ModelIcon /><RunLink href="#">{model}</RunLink></Inline> : "-"}</Cell>
          {i === 0 && (
            <MoreCell rowSpan={runs.length}>
              <MoreButton><CirclePlus size={16} />{"Show more columns\n(4 total)"}</MoreButton>
            </MoreCell>
          )}
        </Row>
      ))}
    </tbody>
  </RunTable>
);

const RunsPanel = () => (
  <Main>
    <MainTop><Heading as="h1">Displaying Runs from 7 Experiments</Heading><ShareButton>Share</ShareButton></MainTop>
    <Filters>
      <RunSearch>
        <Search size={14} />
        <RunSearchInput placeholder={'metrics.rmse < 1 and params.model = "tree"'} aria-label="Search runs" />
        <Info size={15} />
      </RunSearch>
      <Picker label="Time created" width={103} />
      <Picker label="State: Active" width={98} />
      <Picker label="Sort: Created" width={122} icon={<SortIcon color="#11171c" />} />
      <ColumnsButton><ColumnsIcon />Columns<ChevronDown size={10} strokeWidth={3} /></ColumnsButton>
      <ViewActions>
        <IconButton aria-label="More"><EllipsisVertical size={15} strokeWidth={3} /></IconButton>
        <IconButton aria-label="Side panel"><PanelIcon /></IconButton>
        <IconButton aria-label="Refresh"><RefreshCw size={14} /><UpdateCount>1</UpdateCount></IconButton>
      </ViewActions>
    </Filters>
    <ViewTabs>
      <ViewTab $on>Table</ViewTab><ViewTab>Chart</ViewTab><ViewTab>Evaluation <NewTag>Experimental</NewTag></ViewTab>
    </ViewTabs>
    <TableFrame><RunsTable /></TableFrame>
    <RunCount><b>58</b> matching runs</RunCount>
  </Main>
);

const FirefoxWindow = () => (
  <Browser>
    <TabStrip>
      <PinnedTab aria-label="Firefox View"><FirefoxIcon size={15} /></PinnedTab>
      <BrowserTab><AirflowIcon /><TabTitle>Google_X_mention_score</TabTitle><button aria-label="Close tab"><X size={14} /></button></BrowserTab>
      <BrowserTab $active><FlowRing /><TabTitle>MLflow</TabTitle><button aria-label="Close tab"><X size={14} /></button></BrowserTab>
      <NewTab aria-label="New tab"><Plus size={16} /></NewTab>
      <WindowActions>
        <TabList aria-label="List tabs"><ChevronDown size={16} /></TabList>
        <RoundAction aria-label="Minimize"><Minus size={10} /></RoundAction>
        <RoundAction aria-label="Restore"><Copy size={9} /></RoundAction>
        <RoundAction aria-label="Close"><X size={12} /></RoundAction>
      </WindowActions>
    </TabStrip>
    <AddressBar>
      <ToolButton aria-label="Back"><ArrowLeft size={16} /></ToolButton>
      <ToolButton $off aria-label="Forward"><ArrowRight size={16} /></ToolButton>
      <ToolButton aria-label="Reload"><RotateCw size={15} /></ToolButton>
      <AddressBox>
        <AddressMark><Shield size={15} /></AddressMark>
        <AddressMark><File size={14} /></AddressMark>
        127.0.0.1
        <AddressInput defaultValue={address} aria-label="Address" />
        <Star size={16} />
      </AddressBox>
      <ToolButton aria-label="Pocket"><Art size={15} box={16}><path d="M1.500 2H14.500V8Q14 14 8 15Q2 14 1.500 8ZM4.500 6L8 9.500L11.500 6" fill="none" stroke="#333" strokeWidth="1.400" /></Art></ToolButton>
      <ToolButton aria-label="Extensions"><Puzzle size={16} /></ToolButton>
      <ToolButton aria-label="Menu"><Menu size={16} /></ToolButton>
    </AddressBar>
    <SiteHeader>
      <Brand href="#">ml<BrandFlow $tall>f</BrandFlow><BrandFlow>l</BrandFlow><FlowRing size={15} w={8} /><BrandFlow>w</BrandFlow></Brand>
      <Version>2.9.2</Version>
      <SiteLinks><SiteLink href="#" $on>Experiments</SiteLink><SiteLink href="#">Models</SiteLink></SiteLinks>
      <SiteLinks $end><SiteLink href="#">GitHub</SiteLink><SiteLink href="#">Docs</SiteLink></SiteLinks>
    </SiteHeader>
    <Page><ExperimentsPanel /><RunsPanel /></Page>
    <LinkPreview>127.0.0.1:5000/#/</LinkPreview>
  </Browser>
);

const MonitorScreen = () => (
  <Monitor>
    <TitleBar>
      <VmwareIcon size={14} />airflow - VMware Workstation 17 Player (Non-commercial use only)
      <TitleActions>
        <button aria-label="Minimize"><Minus size={13} /></button>
        <button aria-label="Restore"><Copy size={13} /></button>
        <button aria-label="Close"><X size={14} /></button>
      </TitleActions>
    </TitleBar>
    <PlayerBar>
      <PlayerMenu>Player <Caret /></PlayerMenu>
      <PauseMark aria-label="Pause" />
      <Caret $dim />
      <Art size={16} box={16}><path d="M4 1H12V6H4ZM1 6H15V11H1ZM11 9V15M9 13L11 15L13 13" fill="none" stroke="#444" /></Art>
      <Art size={16} box={16}><path d="M1 4V1H4M12 1H15V4M15 12V15H12M4 15H1V12M4 4H12V12H4Z" fill="none" stroke="#444" /></Art>
      <Art size={16} box={16}><path d="M3 1H15V12M1 5V15H13M1 1L15 15M7 5H11V9" fill="none" stroke="#456" /></Art>
      <PushRight><ChevronsLeft size={14} /></PushRight>
    </PlayerBar>
    <GnomeBar>
      <GnomeLeft><Activities>Activities</Activities><FirefoxIcon size={13} mono />Firefox Web Browser</GnomeLeft>
      <GnomeClock>{"янв 18  19:13"}</GnomeClock>
      <GnomeRight><Busy /><Network size={14} fill="#eee" /><Volume2 size={14} fill="#eee" /><Power size={14} /></GnomeRight>
    </GnomeBar>
    <Guest><DockBar /><FirefoxWindow /></Guest>
    <Taskbar>
      <TaskButton aria-label="Start"><FaWindows size={14} /></TaskButton>
      <TaskButton aria-label="Search"><TaskSearchIcon size={19} /></TaskButton>
      <PinnedApps />
      <Tray><Clock $edge>{"19:13\n18.01.2024"}</Clock></Tray>
    </Taskbar>
  </Monitor>
);

export default function App() {
  return (
    <>
      <GlobalStyle />
      <Screens><LaptopScreen /><MonitorScreen /></Screens>
    </>
  );
}
